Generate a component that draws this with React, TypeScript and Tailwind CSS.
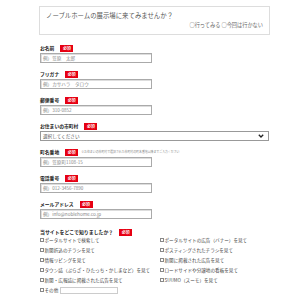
const font = { fontFamily: '"Noto Sans CJK JP", "Noto Sans", sans-serif' };

function Badge() {
  return (
    <span className="ml-[6px] inline-flex h-[7px] w-[13px] items-center justify-center bg-[#e60012] text-[4px] font-bold leading-none text-white">
      必須
    </span>
  );
}

function Label({ text, note }: { text: string; note?: string }) {
  return (
    <div className="mt-[8px] flex h-[6px] items-center">
      <span className="text-[4.8px] font-bold leading-none text-[#222]">{text}</span>
      <Badge />
      {note ? (
        <span className="ml-[3px] text-[2.9px] leading-none text-[#888]">{note}</span>
      ) : null}
    </div>
  );
}

function Field({ label, placeholder, note }: { label: string; placeholder: string; note?: string }) {
  return (
    <div>
      <Label text={label} note={note} />
      <div className="mt-[2px] flex h-[10px] w-[112px] items-center border border-[#aaa] px-[2px] text-[4.6px] leading-none text-[#888] shadow-[inset_1px_1px_0_#ddd]">
        {placeholder}
      </div>
    </div>
  );
}

function Check({ text }: { text: string }) {
  return (
    <div className="flex h-[10px] items-center whitespace-nowrap text-[4.6px] leading-none text-[#444]">
      <span className="mr-[0.5px] inline-block h-[4px] w-[4px] border-[0.7px] border-[#888]" />
      {text}
    </div>
  );
}

export default function App() {
  const left = [
    "ポータルサイトで検索して",
    "新聞折込のチラシを見て",
    "情報リビングを見て",
    "タウン誌（ぷらざ・ひたっち・かしまなど）を見て",
    "新聞・広報誌に掲載された広告を見て",
  ];
  const right = [
    "ポータルサイトの広告（バナー）を見て",
    "ポスティングされたチラシを見て",
    "新聞に掲載された広告を見て",
    "ロードサイドや分譲地の看板を見て",
    "SUUMO（スーモ）を見て",
  ];

  return (
    <div className="h-[300px] w-[300px] overflow-hidden bg-white" style={font}>
      <div className="ml-[39px] w-[231px] pt-[6px]">
        <div className="h-[29px] border border-[#ddd] px-[6px] pt-[5px]">
          <div className="text-[6.4px] leading-[8px] text-[#555]">ノーブルホームの展示場に来てみませんか？</div>
          <div className="mt-[1px] text-right text-[5.2px] leading-[7px] text-[#666]">
            ○行ってみる ○今回は行かない
          </div>
        </div>

        <div className="ml-[1px] pt-[2px]">
          <Field label="お名前" placeholder="例）笠原　太郎" />
          <Field label="フリガナ" placeholder="例）カサハラ　タロウ" />
          <Field label="郵便番号" placeholder="例）310-0852" />

          <div>
            <Label text="お住まいの市町村" />
            <div className="mt-[2px] flex h-[10px] w-[229px] items-center justify-between border border-[#999] pl-[2px] pr-[4px] text-[4.6px] leading-none text-[#555]">
              <span>選択してください</span>
              <svg width="6" height="4" viewBox="0 0 6 4">
                <path d="M0.8 0.8 L3 3 L5.2 0.8" fill="none" stroke="#222" strokeWidth="1.3" />
              </svg>
            </div>
          </div>

          <Field
            label="町名番地"
            placeholder="例）笠原町1108-15"
            note="※お住まいの市町村で選択された市町村の町名番地以降までご入力ください"
          />
          <Field label="電話番号" placeholder="例）012-3456-7890" />
          <Field label="メールアドレス" placeholder="例）info@noblehome.co.jp" />

          <div className="mt-[10px] flex h-[6px] items-center">
            <span className="text-[4.9px] font-bold leading-none text-[#222]">当サイトをどこで知りましたか？</span>
            <Badge />
          </div>

          <div className="grid grid-cols-[120px_1fr]">
            {left.map((t, i) => (
              <div key={t} className="contents">
                <Check text={t} />
                <Check text={right[i]} />
              </div>
            ))}
            <div className="flex h-[10px] items-center whitespace-nowrap text-[4.6px] leading-none text-[#444]">
              <span className="mr-[0.5px] inline-block h-[4px] w-[4px] border-[0.7px] border-[#888]" />
              その他
              <span className="ml-[2px] inline-block h-[7px] w-[58px] border border-[#ccc]" />
            </div>
          </div>
        </div>
      </div>
    </div>
  );
}
